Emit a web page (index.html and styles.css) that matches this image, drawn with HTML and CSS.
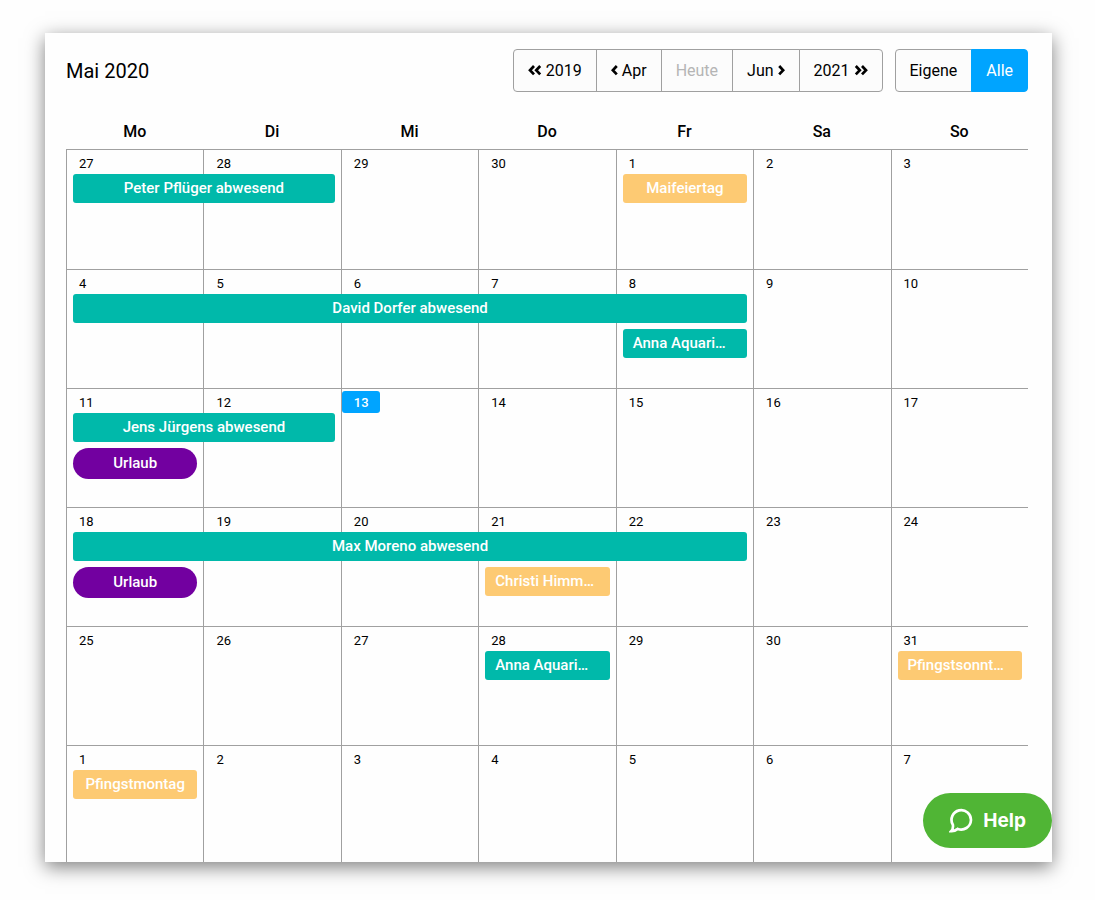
FILE: index.html
```html
<!DOCTYPE html>
<html lang="de">
<head>
  <meta charset="UTF-8">
  <meta name="viewport" content="width=device-width, initial-scale=1.0">
  <title>Kalender</title>
  <link rel="stylesheet" href="styles.css">
</head>
<body>
  <main class="calendar">
    <header class="toolbar">
      <h1>Mai 2020</h1>
      <div class="button-group">
        <button type="button">
          <svg width="14" height="12" viewBox="0 0 14 12"><path d="M6 1L2 5.2L6 9.4M12.2 1L8.2 5.2L12.2 9.4"/></svg>
          2019
        </button>
        <button type="button">
          <svg width="7" height="12" viewBox="0 0 7 12"><path d="M5.8 1L1.8 5.2L5.8 9.4"/></svg>
          Apr
        </button>
        <button type="button" disabled>Heute</button>
        <button type="button">
          Jun
          <svg width="7" height="12" viewBox="0 0 7 12"><path d="M1.2 1L5.2 5.2L1.2 9.4"/></svg>
        </button>
        <button type="button">
          2021
          <svg width="14" height="12" viewBox="0 0 14 12"><path d="M1.8 1L5.8 5.2L1.8 9.4M8 1L12 5.2L8 9.4"/></svg>
        </button>
      </div>
      <div class="button-group">
        <button type="button">Eigene</button>
        <button type="button" class="active">Alle</button>
      </div>
    </header>

    <table class="month">
      <thead>
        <tr>
          <th>Mo</th>
          <th>Di</th>
          <th>Mi</th>
          <th>Do</th>
          <th>Fr</th>
          <th>Sa</th>
          <th>So</th>
        </tr>
      </thead>
      <tbody>
        <tr>
          <td>
            <span class="day">27</span>
            <div class="event absence span-2">Peter Pflüger abwesend</div>
          </td>
          <td><span class="day">28</span></td>
          <td><span class="day">29</span></td>
          <td><span class="day">30</span></td>
          <td>
            <span class="day">1</span>
            <div class="event holiday">Maifeiertag</div>
          </td>
          <td><span class="day">2</span></td>
          <td><span class="day">3</span></td>
        </tr>
        <tr>
          <td>
            <span class="day">4</span>
            <div class="event absence span-5">David Dorfer abwesend</div>
          </td>
          <td><span class="day">5</span></td>
          <td><span class="day">6</span></td>
          <td><span class="day">7</span></td>
          <td>
            <span class="day">8</span>
            <div class="event absence short second">Anna Aquari…</div>
          </td>
          <td><span class="day">9</span></td>
          <td><span class="day">10</span></td>
        </tr>
        <tr>
          <td>
            <span class="day">11</span>
            <div class="event absence span-2">Jens Jürgens abwesend</div>
            <div class="event vacation">Urlaub</div>
          </td>
          <td><span class="day">12</span></td>
          <td><span class="day today">13</span></td>
          <td><span class="day">14</span></td>
          <td><span class="day">15</span></td>
          <td><span class="day">16</span></td>
          <td><span class="day">17</span></td>
        </tr>
        <tr>
          <td>
            <span class="day">18</span>
            <div class="event absence span-5">Max Moreno abwesend</div>
            <div class="event vacation">Urlaub</div>
          </td>
          <td><span class="day">19</span></td>
          <td><span class="day">20</span></td>
          <td>
            <span class="day">21</span>
            <div class="event holiday short second">Christi Himm…</div>
          </td>
          <td><span class="day">22</span></td>
          <td><span class="day">23</span></td>
          <td><span class="day">24</span></td>
        </tr>
        <tr>
          <td><span class="day">25</span></td>
          <td><span class="day">26</span></td>
          <td><span class="day">27</span></td>
          <td>
            <span class="day">28</span>
            <div class="event absence short">Anna Aquari…</div>
          </td>
          <td><span class="day">29</span></td>
          <td><span class="day">30</span></td>
          <td>
            <span class="day">31</span>
            <div class="event holiday short">Pfingstsonnt…</div>
          </td>
        </tr>
        <tr>
          <td>
            <span class="day">1</span>
            <div class="event holiday">Pfingstmontag</div>
          </td>
          <td><span class="day">2</span></td>
          <td><span class="day">3</span></td>
          <td><span class="day">4</span></td>
          <td><span class="day">5</span></td>
          <td><span class="day">6</span></td>
          <td><span class="day">7</span></td>
        </tr>
      </tbody>
    </table>

    <button type="button" class="help">
      <svg width="24" height="26" viewBox="0 0 24 26"><path d="M3.8 16.6A9.7 9.7 0 1 1 8.8 20.9Q5.5 23.4 2.2 23.2Q4.6 20.6 3.8 16.6Z"/></svg>
      Help
    </button>
  </main>
</body>
</html>
```
FILE: styles.css
```css
* {
  box-sizing: border-box;
}
body {
  margin: 0;
  padding: 33px 43px 38px 45px;
  background-color: #fefefe;
  color: #000;
  font-family: Roboto, "Liberation Sans", sans-serif;
  font-size: 16px;
}
.calendar {
  position: relative;
  height: calc(100vh - 71px);
  padding: 16px 24px 0 21px;
  overflow: hidden;
  background-color: #fefefe;
  box-shadow: 0 5px 18px rgba(0, 0, 0, 0.5);
}

/* toolbar */
.toolbar {
  display: flex;
  align-items: center;
  gap: 12px;
}
h1 {
  margin: 0 auto 0 0;
  font-size: 20px;
  font-weight: 400;
}
button {
  font-family: inherit;
  font-size: 16px;
  cursor: pointer;
}
.button-group {
  display: flex;
}
.button-group button {
  display: flex;
  align-items: center;
  gap: 4px;
  height: 43px;
  margin-left: -1px;
  padding: 0 14px;
  border: 1px solid #a0a0a0;
  background-color: #fcfcfc;
  color: #000;
}
.button-group button:first-child {
  margin-left: 0;
  border-radius: 4px 0 0 4px;
}
.button-group button:last-child {
  border-radius: 0 4px 4px 0;
}
.button-group button:disabled {
  color: #b5b5b5;
  cursor: default;
}
.button-group .active {
  border-color: #00a4ff;
  background-color: #00a4ff;
  color: #fff;
}
svg {
  fill: none;
  stroke: currentColor;
  stroke-width: 2.7;
}

/* month */
.month {
  width: 100%;
  margin-top: 22px;
  border-spacing: 0;
  table-layout: fixed;
}
th {
  height: 35px;
  padding: 0;
  font-weight: 500;
}
td {
  height: 119px;
  padding: 0;
  border-top: 1px solid #a0a0a0;
  border-left: 1px solid #a0a0a0;
  vertical-align: top;
}
tbody tr:first-child td {
  height: 120px;
}
.day {
  display: block;
  width: 38px;
  height: 22px;
  margin: 2px 0 0;
  padding-left: 12px;
  font-size: 13px;
  line-height: 23px;
}
.today {
  border-radius: 3px;
  background-color: #00a4ff;
  color: #fff;
  font-weight: 500;
}

/* events */
.event {
  position: relative;
  z-index: 1;
  height: 29px;
  margin: 0 6px 6px;
  padding: 0 10px;
  border-radius: 3px;
  color: #fff;
  font-size: 15px;
  font-weight: 500;
  line-height: 29px;
  text-align: center;
  white-space: nowrap;
}
.absence {
  background-color: #00b9aa;
}
.holiday {
  background-color: #fdca73;
}
.vacation {
  height: 31px;
  border-radius: 16px;
  background-color: #7200a0;
  line-height: 31px;
}
.short {
  text-align: left;
}
/* the extra pixels cover the cell borders in between */
.span-2 {
  width: calc(200% - 11px);
}
.span-5 {
  width: calc(500% - 8px);
}
.second {
  margin-top: 35px;
}

/* help */
.help {
  position: absolute;
  right: 0;
  bottom: 14px;
  z-index: 2;
  display: flex;
  align-items: center;
  gap: 10px;
  height: 55px;
  padding: 0 26px;
  border: none;
  border-radius: 28px;
  background-color: #50b535;
  color: #fff;
  font-family: Inter, sans-serif;
  font-size: 19px;
  font-weight: 700;
}
```
